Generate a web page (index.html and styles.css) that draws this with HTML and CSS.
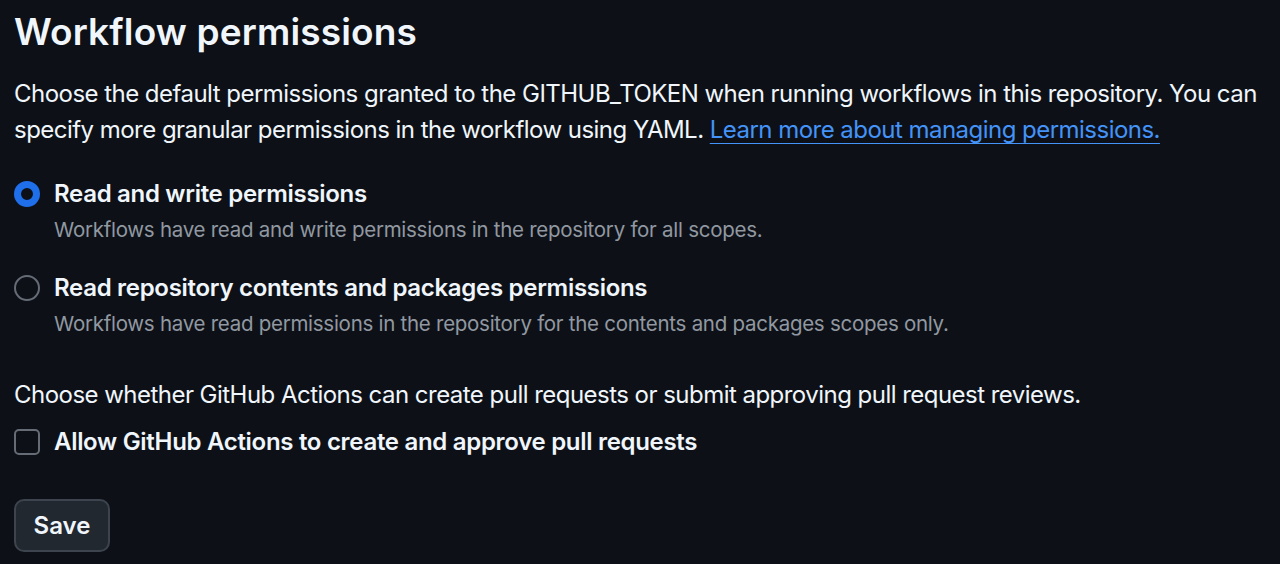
FILE: index.html
```html
<!DOCTYPE html>
<html lang="en">
<head>
<meta charset="utf-8">
<title>Workflow permissions</title>
<link rel="stylesheet" href="styles.css">
</head>
<body>
<main class="page">
  <h2 class="title">Workflow permissions</h2>
  <p class="lead">Choose the default permissions granted to the GITHUB_TOKEN when running workflows in this repository. You can specify more granular permissions in the workflow using YAML. <a class="link" href="#">Learn more about managing permissions.</a></p>

  <div class="options">
    <label class="option">
      <span class="radio radio-checked"></span>
      <span class="option-text">
        <span class="option-label">Read and write permissions</span>
        <span class="option-note">Workflows have read and write permissions in the repository for all scopes.</span>
      </span>
    </label>
    <label class="option">
      <span class="radio"></span>
      <span class="option-text">
        <span class="option-label">Read repository contents and packages permissions</span>
        <span class="option-note">Workflows have read permissions in the repository for the contents and packages scopes only.</span>
      </span>
    </label>
  </div>

  <p class="lead second">Choose whether GitHub Actions can create pull requests or submit approving pull request reviews.</p>

  <label class="check-row">
    <span class="checkbox"></span>
    <span class="option-label">Allow GitHub Actions to create and approve pull requests</span>
  </label>

  <div class="actions">
    <button class="btn" type="button">Save</button>
  </div>
</main>
</body>
</html>
```
FILE: styles.css
```css
html, body {
  margin: 0;
  padding: 0;
  background: #0d1117;
}

body {
  font-family: Inter, "Noto Sans", "Liberation Sans", sans-serif;
  color: #f0f6fc;
}

.page {
  padding: 0 14px;
}

.title {
  margin: 0;
  font-size: 37px;
  font-weight: 600;
  line-height: 64px;
  letter-spacing: 0.15px;
}

.lead {
  margin: 12px 0 0;
  font-size: 24px;
  line-height: 36px;
  font-weight: 400;
  letter-spacing: -0.53px;
}

.link {
  color: #4493f8;
  text-decoration: underline;
  text-underline-offset: 5px;
  text-decoration-thickness: 1px;
}

.options {
  margin-top: 28px;
  display: flex;
  flex-direction: column;
  gap: 22px;
}

.option {
  display: flex;
  align-items: flex-start;
  gap: 14px;
}

.radio {
  flex: none;
  width: 26px;
  height: 26px;
  margin-top: 5px;
  border-radius: 50%;
  border: 2px solid #656c76;
  box-sizing: border-box;
}

.radio-checked {
  border: 7px solid #1f6feb;
  background: #0d1117;
}

.option-text {
  display: flex;
  flex-direction: column;
}

.option-label {
  font-size: 24px;
  font-weight: 600;
  line-height: 36px;
  letter-spacing: -0.3px;
}

.option-note {
  font-size: 20.5px;
  line-height: 36px;
  color: #9198a1;
  letter-spacing: -0.27px;
}

.second {
  margin-top: 35px;
}

.check-row {
  margin-top: 11px;
  display: flex;
  align-items: center;
  gap: 14px;
}

.checkbox {
  flex: none;
  width: 26px;
  height: 26px;
  border: 2px solid #656c76;
  border-radius: 5px;
  box-sizing: border-box;
}

.actions {
  margin-top: 39px;
}

.btn {
  font-family: inherit;
  font-size: 24px;
  font-weight: 600;
  color: #f0f6fc;
  background: #212830;
  border: 2px solid #3d444d;
  border-radius: 10px;
  height: 53px;
  width: 96px;
  padding: 0;
  cursor: pointer;
}
```
